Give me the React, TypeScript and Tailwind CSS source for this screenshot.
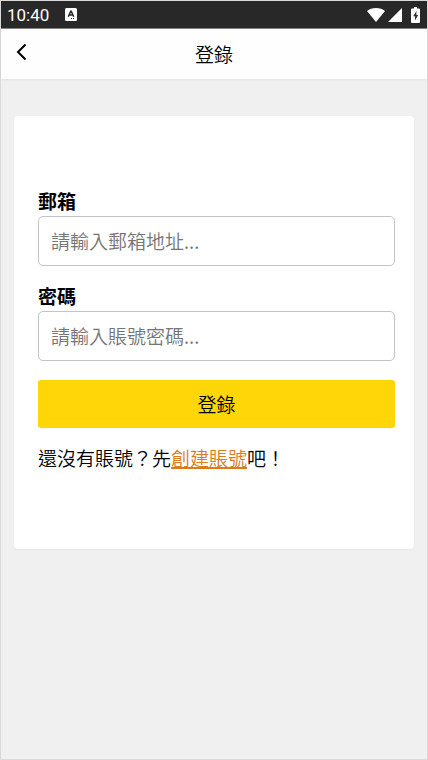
import { useState } from "react";
import type { FormEvent, InputHTMLAttributes } from "react";

export default function App() {
  const [email, setEmail] = useState("");
  const [password, setPassword] = useState("");

  function handleSubmit(event: FormEvent<HTMLFormElement>) {
    event.preventDefault();
  }

  return (
    <div className="flex min-h-screen flex-col border border-[#dadada] bg-[#f0f0f0] font-['Noto_Sans_CJK_TC',sans-serif] text-[19px] leading-7 font-[350] text-black">
      <StatusBar />

      <header className="grid h-[50px] grid-cols-[48px_1fr_48px] items-center bg-[#fefefe] shadow-[0_1px_2px_rgba(0,0,0,0.06)]">
        <button
          type="button"
          aria-label="返回"
          className="flex h-full items-center pb-1 pl-[13px]"
        >
          <svg
            className="h-5 w-4"
            viewBox="0 0 16 20"
            fill="none"
            stroke="currentColor"
            strokeWidth="2"
            aria-hidden="true"
          >
            <path d="M11.500 2.500 4 10l7.500 7.500" />
          </svg>
        </button>
        <h1 className="text-center font-[350]">登錄</h1>
      </header>

      <main className="px-[13px] pt-[37px] pb-8">
        <form
          onSubmit={handleSubmit}
          className="rounded-sm bg-white pt-[72px] pr-[19px] pb-[77px] pl-6 shadow-[0_1px_2px_rgba(0,0,0,0.05)]"
        >
          <Field
            id="email"
            label="郵箱"
            type="email"
            placeholder="請輸入郵箱地址..."
            value={email}
            onChange={(event) => setEmail(event.target.value)}
          />
          <div className="mt-[17px]">
            <Field
              id="password"
              label="密碼"
              type="password"
              placeholder="請輸入賬號密碼..."
              value={password}
              onChange={(event) => setPassword(event.target.value)}
            />
          </div>
          <button
            type="submit"
            className="mt-[19px] block h-12 w-full rounded-[3px] bg-[#ffd608]"
          >
            登錄
          </button>
          <p className="mt-4">
            還沒有賬號？先
            <a
              href="#register"
              className="text-[#dc7a1c] underline decoration-2"
            >
              創建賬號
            </a>
            吧！
          </p>
        </form>
      </main>
    </div>
  );
}

type FieldProps = InputHTMLAttributes<HTMLInputElement> & {
  id: string;
  label: string;
};

function Field({ id, label, ...inputProps }: FieldProps) {
  return (
    <div>
      <label htmlFor={id} className="mb-0.5 block leading-[26px] font-bold">
        {label}
      </label>
      <input
        id={id}
        className="block h-[50px] w-full rounded-[5px] border border-[#c4c4c4] bg-white px-3 pb-0.5 placeholder:text-[#757575]"
        {...inputProps}
      />
    </div>
  );
}

function StatusBar() {
  return (
    <div className="flex h-7 items-center border-b border-[#858585] bg-[#282828] pr-[7px] pl-[6px] text-white">
      <span className="font-[Roboto,sans-serif] text-[17px] leading-5 font-normal">
        10:40
      </span>
      <svg
        className="ml-4 h-[13px] w-3"
        viewBox="0 0 12 13"
        aria-hidden="true"
      >
        <rect width="12" height="13" rx="1.500" fill="#fff" />
        <path
          d="m3.300 8.800 2.400-5.600h.6l2.400 5.600M4.200 7h3.600"
          fill="none"
          stroke="#282828"
          strokeWidth="1.500"
        />
        <path d="M6 10h1v1H6zM8 10h1v1H8z" fill="#282828" />
      </svg>
      <div className="ml-auto flex items-center">
        <svg
          className="h-[14px] w-[18px]"
          viewBox="0 0 18 14"
          fill="#fff"
          aria-hidden="true"
        >
          <path d="M9 14 0 3.100C2.300 1.100 5.500 0 9 0s6.700 1.100 9 3.100z" />
        </svg>
        <svg
          className="ml-[3px] h-[14px] w-[14px]"
          viewBox="0 0 14 14"
          fill="#fff"
          aria-hidden="true"
        >
          <path d="M14 0v14H0z" />
        </svg>
        <svg
          className="ml-[9px] h-4 w-[9px]"
          viewBox="0 0 9 16"
          aria-hidden="true"
        >
          <path
            d="M3 0h3v1.500h2q1 0 1 1V15q0 1-1 1H1q-1 0-1-1V2.500q0-1 1-1h2z"
            fill="#fff"
          />
          <path d="M5.500 4 2.200 9.200h1.900V13.500l3-5.500H5.300z" fill="#282828" />
        </svg>
      </div>
    </div>
  );
}
